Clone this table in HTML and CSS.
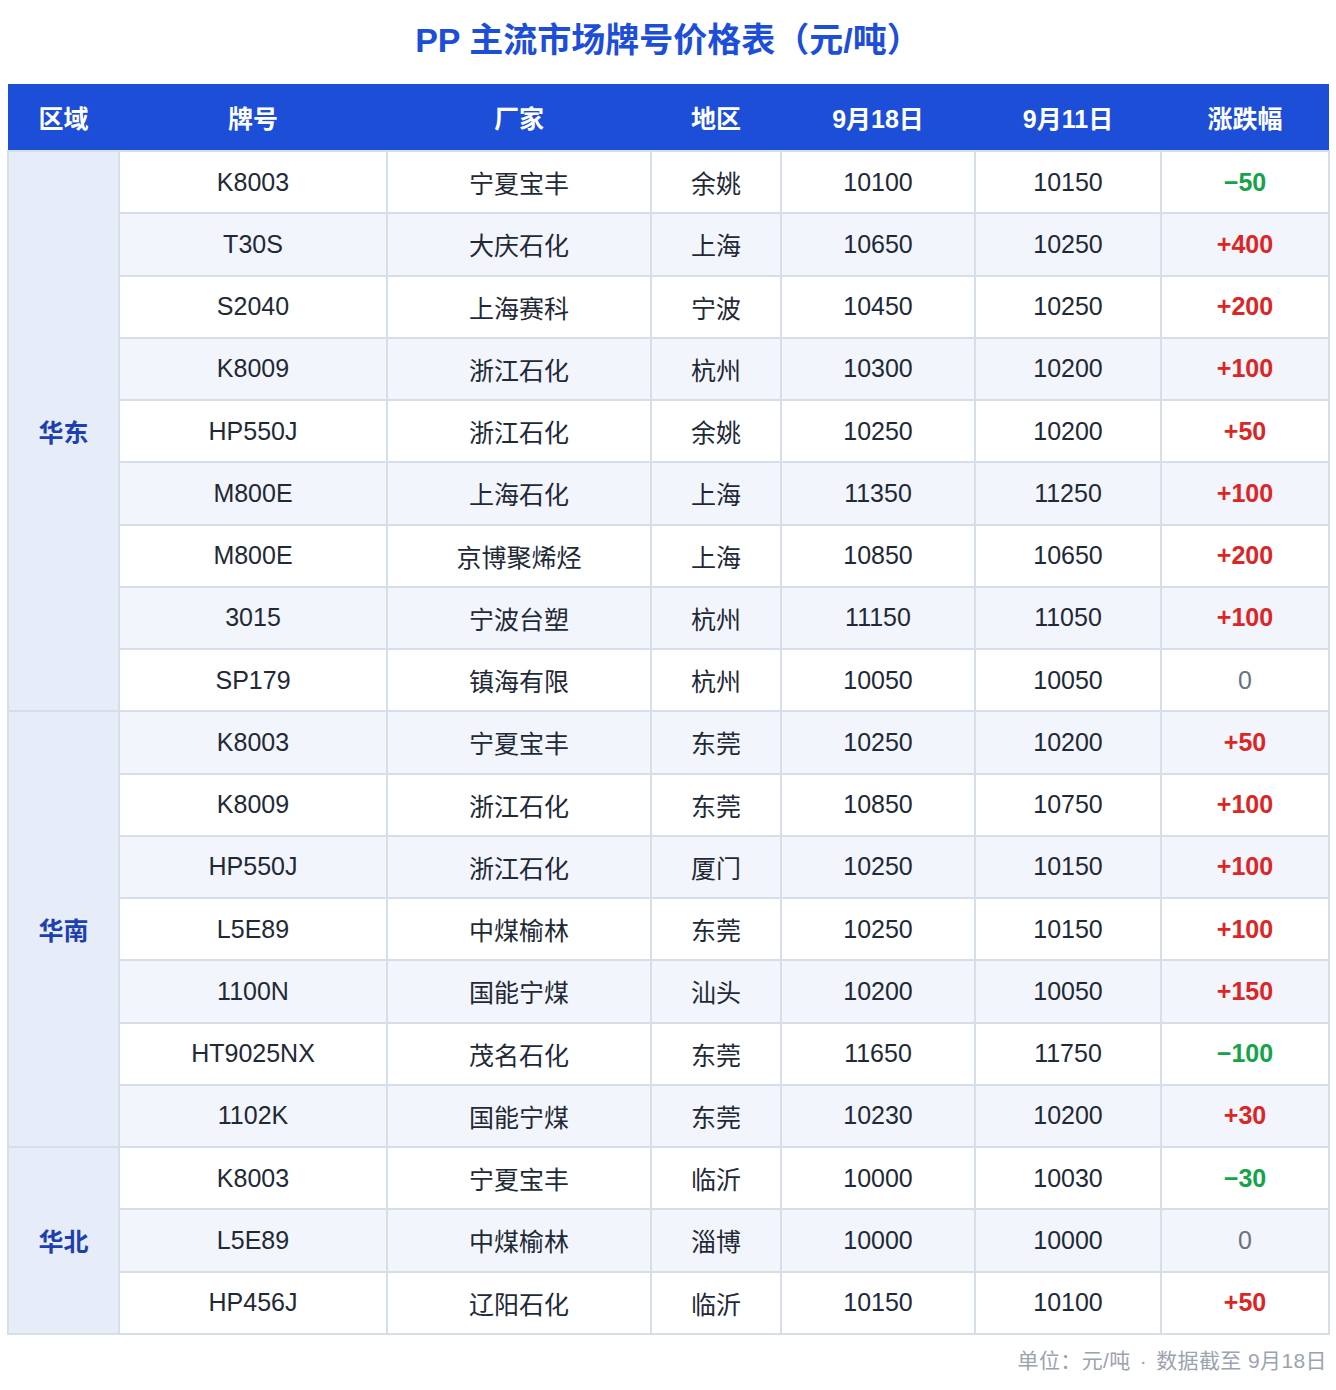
FILE: index.html
```html
<!DOCTYPE html>
<html lang="zh-CN">
<head>
<meta charset="utf-8">
<title>PP 主流市场牌号价格表</title>
<link rel="stylesheet" href="styles.css">
</head>
<body>
<h1 class="title">PP 主流市场牌号价格表（元/吨）</h1>
<table class="price-table">
  <colgroup>
    <col class="c-region"><col class="c-grade"><col class="c-maker"><col class="c-area"><col class="c-d1"><col class="c-d2"><col class="c-chg">
  </colgroup>
  <thead>
    <tr><th>区域</th><th>牌号</th><th>厂家</th><th>地区</th><th>9月18日</th><th>9月11日</th><th>涨跌幅</th></tr>
  </thead>
  <tbody>
    <tr><td class="region" rowspan="9">华东</td><td>K8003</td><td>宁夏宝丰</td><td>余姚</td><td>10100</td><td>10150</td><td class="chg down">−50</td></tr>
    <tr class="alt"><td>T30S</td><td>大庆石化</td><td>上海</td><td>10650</td><td>10250</td><td class="chg up">+400</td></tr>
    <tr><td>S2040</td><td>上海赛科</td><td>宁波</td><td>10450</td><td>10250</td><td class="chg up">+200</td></tr>
    <tr class="alt"><td>K8009</td><td>浙江石化</td><td>杭州</td><td>10300</td><td>10200</td><td class="chg up">+100</td></tr>
    <tr><td>HP550J</td><td>浙江石化</td><td>余姚</td><td>10250</td><td>10200</td><td class="chg up">+50</td></tr>
    <tr class="alt"><td>M800E</td><td>上海石化</td><td>上海</td><td>11350</td><td>11250</td><td class="chg up">+100</td></tr>
    <tr><td>M800E</td><td>京博聚烯烃</td><td>上海</td><td>10850</td><td>10650</td><td class="chg up">+200</td></tr>
    <tr class="alt"><td>3015</td><td>宁波台塑</td><td>杭州</td><td>11150</td><td>11050</td><td class="chg up">+100</td></tr>
    <tr><td>SP179</td><td>镇海有限</td><td>杭州</td><td>10050</td><td>10050</td><td class="chg flat">0</td></tr>
    <tr class="alt"><td class="region" rowspan="7">华南</td><td>K8003</td><td>宁夏宝丰</td><td>东莞</td><td>10250</td><td>10200</td><td class="chg up">+50</td></tr>
    <tr><td>K8009</td><td>浙江石化</td><td>东莞</td><td>10850</td><td>10750</td><td class="chg up">+100</td></tr>
    <tr class="alt"><td>HP550J</td><td>浙江石化</td><td>厦门</td><td>10250</td><td>10150</td><td class="chg up">+100</td></tr>
    <tr><td>L5E89</td><td>中煤榆林</td><td>东莞</td><td>10250</td><td>10150</td><td class="chg up">+100</td></tr>
    <tr class="alt"><td>1100N</td><td>国能宁煤</td><td>汕头</td><td>10200</td><td>10050</td><td class="chg up">+150</td></tr>
    <tr><td>HT9025NX</td><td>茂名石化</td><td>东莞</td><td>11650</td><td>11750</td><td class="chg down">−100</td></tr>
    <tr class="alt"><td>1102K</td><td>国能宁煤</td><td>东莞</td><td>10230</td><td>10200</td><td class="chg up">+30</td></tr>
    <tr><td class="region" rowspan="3">华北</td><td>K8003</td><td>宁夏宝丰</td><td>临沂</td><td>10000</td><td>10030</td><td class="chg down">−30</td></tr>
    <tr class="alt"><td>L5E89</td><td>中煤榆林</td><td>淄博</td><td>10000</td><td>10000</td><td class="chg flat">0</td></tr>
    <tr><td>HP456J</td><td>辽阳石化</td><td>临沂</td><td>10150</td><td>10100</td><td class="chg up">+50</td></tr>
  </tbody>
</table>
<p class="note">单位：元/吨<span class="dot">·</span>数据截至 9月18日</p>
</body>
</html>
```

FILE: styles.css
```css
html, body {
  margin: 0;
  padding: 0;
  background: #ffffff;
}
body {
  padding: 0 7px;
  font-family: "Liberation Sans", "Noto Sans CJK SC", sans-serif;
  color: #1f2937;
}
.title {
  margin: 0;
  padding: 17px 0 20px;
  text-align: center;
  font-size: 34px;
  line-height: 47px;
  font-weight: 700;
  color: #1d4ed8;
}
.price-table {
  width: 1321px;
  table-layout: fixed;
  border-collapse: collapse;
  font-size: 25px;
}
.c-region { width: 111px; }
.c-grade { width: 268px; }
.c-maker { width: 264px; }
.c-area { width: 130px; }
.c-d1 { width: 194px; }
.c-d2 { width: 186px; }
.c-chg { width: 168px; }

.price-table th {
  background: #1d4ed8;
  color: #ffffff;
  font-weight: 700;
  height: 66px;
  padding: 0;
  border: 0;
  text-align: center;
}
.price-table td {
  height: 60.26px;
  padding: 0;
  border: 2px solid #d6deea;
  text-align: center;
  background: #ffffff;
}
.price-table tr.alt td {
  background: #f2f5fb;
}
.price-table td.region,
.price-table tr.alt td.region {
  background: #e6edf8;
  color: #1e40af;
  font-weight: 700;
}
.chg { font-weight: 700; }
.up { color: #dc2626; }
.down { color: #16a34a; }
.price-table td.flat { color: #6b7280; font-weight: 400; }
.note {
  margin: 12px 2px 0 0;
  text-align: right;
  font-size: 21px;
  line-height: 28px;
  letter-spacing: 0.4px;
  color: #9ca3af;
}
.dot {
  margin: 0 9px;
}
```
